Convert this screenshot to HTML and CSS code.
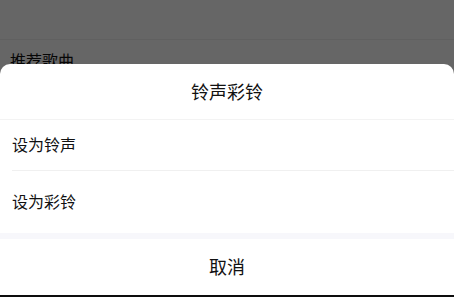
FILE: index.html
```html
<!DOCTYPE html>
<html lang="zh">
<head>
<meta charset="utf-8">
<link rel="stylesheet" href="styles.css">
</head>
<body>
<div class="page">
  <div class="topbar"></div>
  <div class="section-title">推荐歌曲</div>
  <div class="tabbar"></div>
</div>
<div class="mask"></div>
<div class="sheet">
  <div class="sheet-title">铃声彩铃</div>
  <div class="options">
    <div class="option">设为铃声</div>
    <div class="option">设为彩铃</div>
  </div>
  <div class="gap"></div>
  <div class="cancel">取消</div>
</div>
</body>
</html>
```
FILE: styles.css
```css
html, body {
  margin: 0;
  padding: 0;
  width: 454px;
  height: 297px;
  overflow: hidden;
  font-family: "Noto Sans CJK SC", "Noto Sans", sans-serif;
  background: #fff;
}
.page {
  width: 454px;
  height: 297px;
  display: flex;
  flex-direction: column;
  background: #fff;
}
.topbar {
  height: 39px;
  border-bottom: 1px solid #f0f0f0;
  flex-shrink: 0;
}
.section-title {
  padding: 9px 0 0 10px;
  font-size: 16px;
  line-height: 22px;
  color: #111;
}
.tabbar {
  margin-top: auto;
  height: 2px;
  background: #222;
}
.mask {
  position: absolute;
  inset: 0;
  background: rgba(0, 0, 0, 0.6);
}
.sheet {
  position: absolute;
  left: 0;
  right: 0;
  top: 64px;
  height: 231px;
  background: #fff;
  border-radius: 10px 10px 0 0;
  display: flex;
  flex-direction: column;
  color: #111;
}
.sheet-title {
  height: 56px;
  box-sizing: border-box;
  padding-bottom: 2px;
  display: flex;
  align-items: center;
  justify-content: center;
  font-size: 18px;
  border-bottom: 1px solid #f3f3f3;
}
.options {
  display: flex;
  flex-direction: column;
  padding-left: 12px;
}
.option {
  height: 50px;
  box-sizing: border-box;
  padding-bottom: 2px;
  display: flex;
  align-items: center;
  font-size: 16px;
}
.option + .option {
  border-top: 1px solid #f0f0f0;
  height: 63px;
  padding-bottom: 2px;
}
.gap {
  height: 6px;
  background: #f7f7fb;
}
.cancel {
  flex: 1;
  padding-bottom: 3px;
  display: flex;
  align-items: center;
  justify-content: center;
  font-size: 18px;
}
```
